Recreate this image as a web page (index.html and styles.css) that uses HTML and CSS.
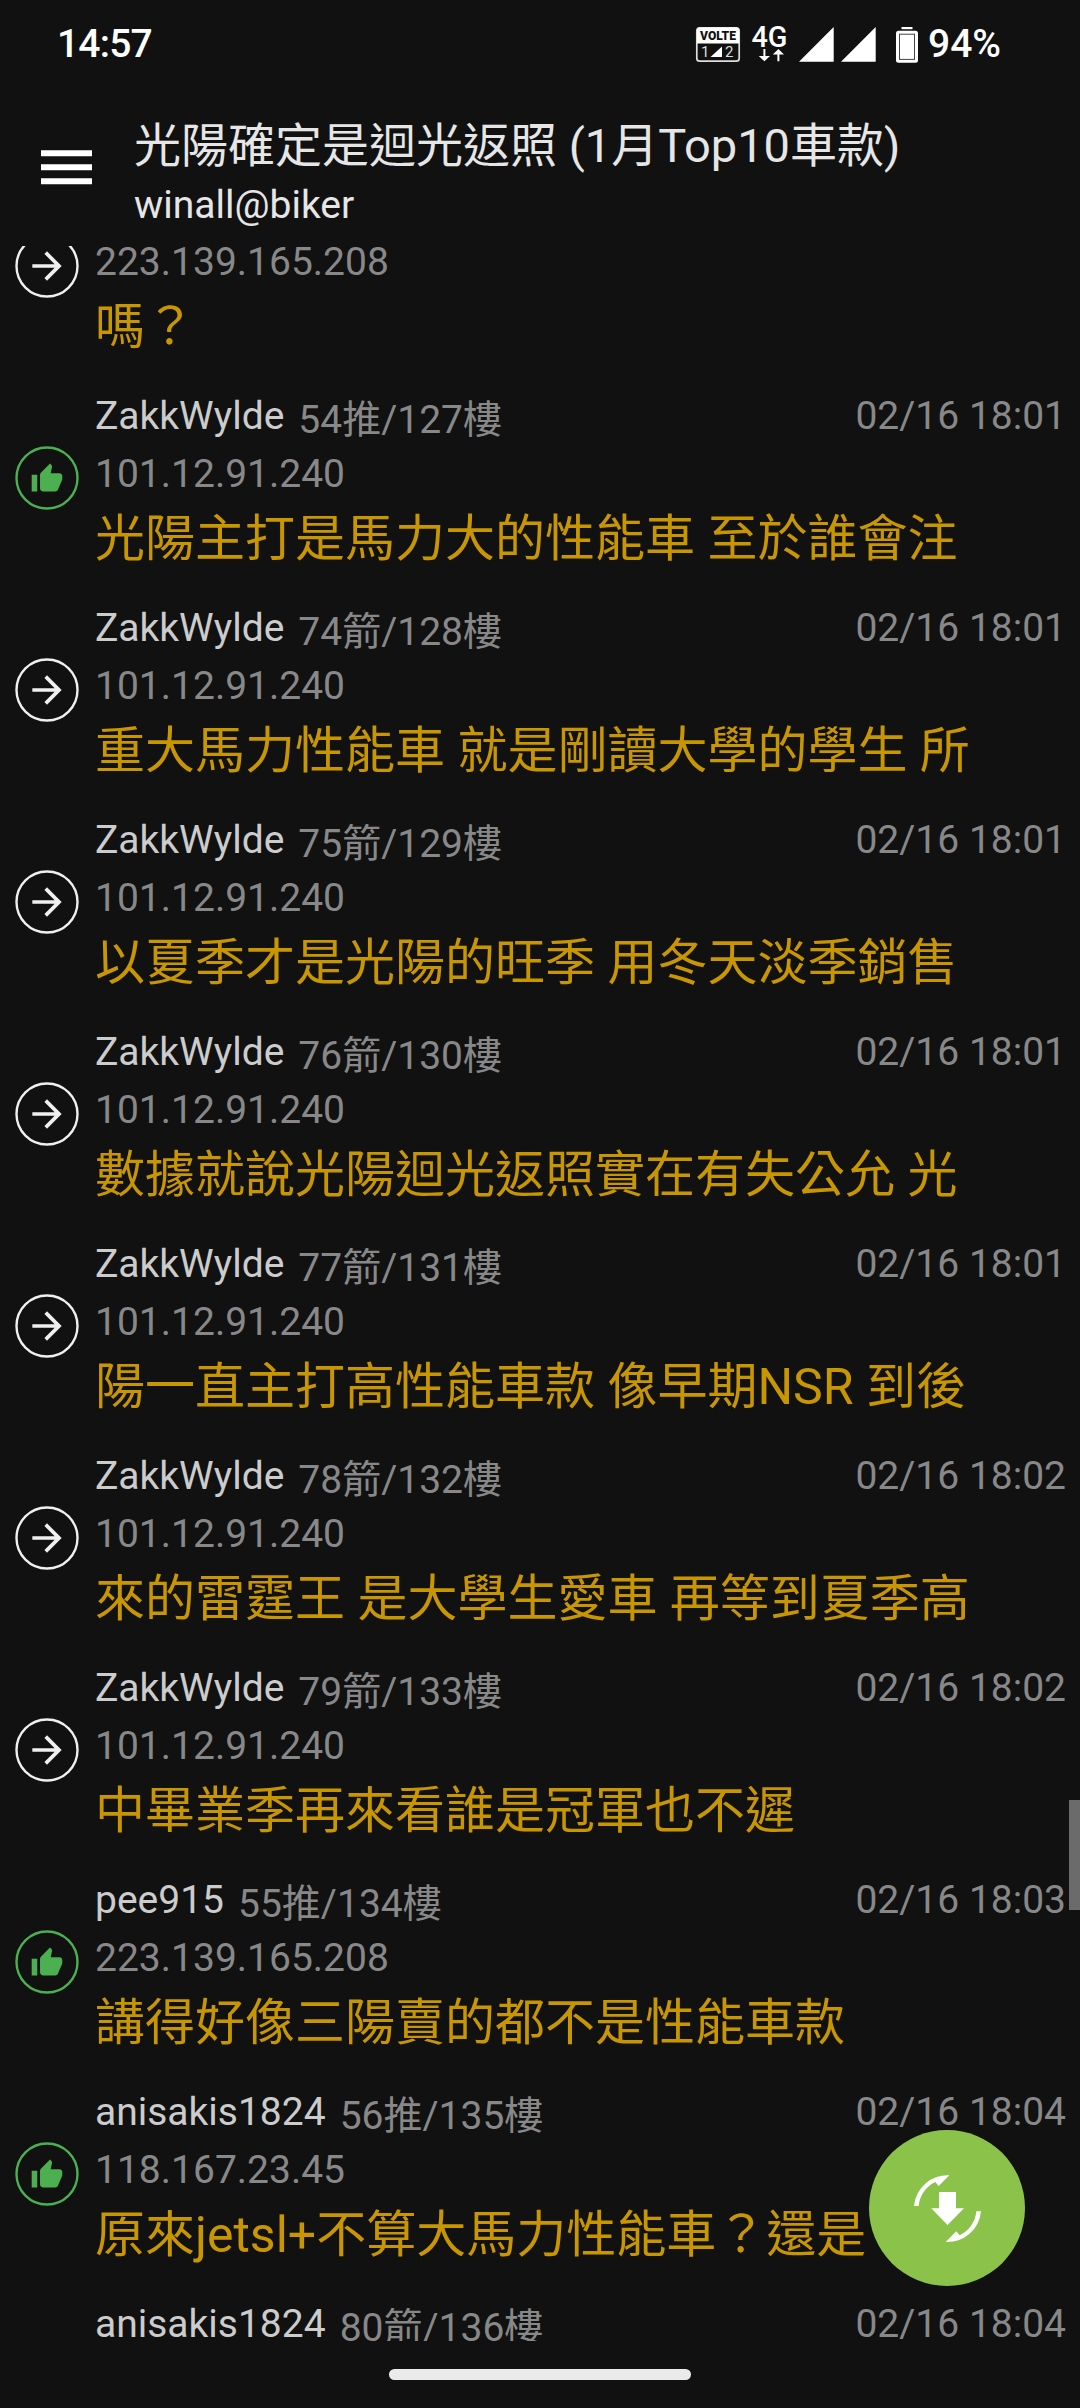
FILE: index.html
```html
<!DOCTYPE html>
<html lang="zh-Hant">
<head>
<meta charset="utf-8">
<title>光陽確定是迴光返照 (1月Top10車款)</title>
<link rel="stylesheet" href="styles.css">
</head>
<body>
<svg class="defs" aria-hidden="true">
  <symbol id="arrow" viewBox="0 0 64 64">
    <circle cx="32" cy="32" r="30.5" fill="none" stroke="currentColor" stroke-width="2.4"/>
    <path transform="translate(10 10) scale(1.8333)" fill="currentColor" d="M12 4l-1.41 1.41L16.17 11H4v2h12.17l-5.58 5.59L12 20l8-8z"/>
  </symbol>
  <symbol id="thumb" viewBox="0 0 64 64">
    <circle cx="32" cy="32" r="30.5" fill="none" stroke="currentColor" stroke-width="2.4"/>
    <path transform="translate(15.3 16.2) scale(1.39)" fill="currentColor" d="M1 21h4V9H1v12zm22-11c0-1.1-.9-2-2-2h-6.31l.95-4.57.03-.32c0-.41-.17-.79-.44-1.06L14.17 1 7.59 7.59C7.22 7.95 7 8.45 7 9v10c0 1.1.9 2 2 2h9c.83 0 1.54-.5 1.84-1.22l3.02-7.05c.09-.23.14-.47.14-.73v-2z"/>
  </symbol>
</svg>
<div class="screen">
  <div class="status">
    <span class="clock">14:57</span>
    <svg class="indicators" width="230" height="44" viewBox="690 22 230 44">
      <rect x="696.8" y="27.8" width="42.4" height="33.4" rx="3" fill="none" stroke="#ddd" stroke-width="1.7"/>
      <path d="M697 43.5V30.5a3 3 0 0 1 3-3h36a3 3 0 0 1 3 3v13z" fill="#fff"/>
      <text x="718" y="40.4" class="volte" text-anchor="middle" textLength="36" lengthAdjust="spacingAndGlyphs">VOLTE</text>
      <text x="701" y="57.3" class="sim">1</text>
      <text x="725" y="57.3" class="sim">2</text>
      <path d="M710.5 57H722V46.5z" fill="#fff"/>
      <text x="751.5" y="47" class="net" textLength="36" lengthAdjust="spacingAndGlyphs">4G</text>
      <path d="M763.4 49h2v7h4.6l-5.6 5.3-5.6-5.3h4.6zM777.4 61.3h2v-6.8h4.6l-5.6-5.5-5.6 5.5h4.6z" fill="#fff"/>
      <path d="M799 61.7h34.7V27zM841 61.7h34.7V27z" fill="#fff"/>
      <path d="M901.5 27h11v2.2h-11z" fill="#fff"/>
      <rect x="896" y="30.7" width="22" height="32" rx="2.5" fill="#fff"/>
      <rect x="899.5" y="34.2" width="15" height="25.2" fill="none" stroke="#444" stroke-width="1"/>
    </svg>
    <span class="battery">94%</span>
  </div>
  <header class="appbar">
    <svg class="menu" width="51" height="36" viewBox="0 0 51 36" fill="#fff"><path d="M0 1.3h51v6H0zM0 15.3h51v6H0zM0 29.3h51v6H0z"/></svg>
    <div class="titles">
      <h1>光陽確定是迴光返照 (1月Top10車款)</h1>
      <p>winall@biker</p>
    </div>
  </header>
  <main class="list">
    <article class="row first"><svg class="badge"><use href="#arrow"/></svg><div class="body"><div class="meta"></div><div class="ip">223.139.165.208</div><p>嗎？</p></div></article>
    <article class="row"><svg class="badge push"><use href="#thumb"/></svg><div class="body"><div class="meta"><b>ZakkWylde</b><i>54推/127樓</i><time>02/16 18:01</time></div><div class="ip">101.12.91.240</div><p>光陽主打是馬力大的性能車 至於誰會注</p></div></article>
    <article class="row"><svg class="badge"><use href="#arrow"/></svg><div class="body"><div class="meta"><b>ZakkWylde</b><i>74箭/128樓</i><time>02/16 18:01</time></div><div class="ip">101.12.91.240</div><p>重大馬力性能車 就是剛讀大學的學生 所</p></div></article>
    <article class="row"><svg class="badge"><use href="#arrow"/></svg><div class="body"><div class="meta"><b>ZakkWylde</b><i>75箭/129樓</i><time>02/16 18:01</time></div><div class="ip">101.12.91.240</div><p>以夏季才是光陽的旺季 用冬天淡季銷售</p></div></article>
    <article class="row"><svg class="badge"><use href="#arrow"/></svg><div class="body"><div class="meta"><b>ZakkWylde</b><i>76箭/130樓</i><time>02/16 18:01</time></div><div class="ip">101.12.91.240</div><p>數據就說光陽迴光返照實在有失公允 光</p></div></article>
    <article class="row"><svg class="badge"><use href="#arrow"/></svg><div class="body"><div class="meta"><b>ZakkWylde</b><i>77箭/131樓</i><time>02/16 18:01</time></div><div class="ip">101.12.91.240</div><p>陽一直主打高性能車款 像早期NSR 到後</p></div></article>
    <article class="row"><svg class="badge"><use href="#arrow"/></svg><div class="body"><div class="meta"><b>ZakkWylde</b><i>78箭/132樓</i><time>02/16 18:02</time></div><div class="ip">101.12.91.240</div><p>來的雷霆王 是大學生愛車 再等到夏季高</p></div></article>
    <article class="row"><svg class="badge"><use href="#arrow"/></svg><div class="body"><div class="meta"><b>ZakkWylde</b><i>79箭/133樓</i><time>02/16 18:02</time></div><div class="ip">101.12.91.240</div><p>中畢業季再來看誰是冠軍也不遲</p></div></article>
    <article class="row"><svg class="badge push"><use href="#thumb"/></svg><div class="body"><div class="meta"><b>pee915</b><i>55推/134樓</i><time>02/16 18:03</time></div><div class="ip">223.139.165.208</div><p>講得好像三陽賣的都不是性能車款</p></div></article>
    <article class="row"><svg class="badge push"><use href="#thumb"/></svg><div class="body"><div class="meta"><b>anisakis1824</b><i>56推/135樓</i><time>02/16 18:04</time></div><div class="ip">118.167.23.45</div><p>原來jetsl+不算大馬力性能車？還是</p></div></article>
    <article class="row"><div class="badge"></div><div class="body"><div class="meta"><b>anisakis1824</b><i>80箭/136樓</i><time>02/16 18:04</time></div></div></article>
  </main>
  <footer class="nav"><span class="pill"></span></footer>
  <div class="scrollbar"></div>
  <button class="fab" aria-label="更新">
    <svg width="156" height="156" viewBox="87 150 468 468" fill="#fff">
      <path d="M297 336h51v49h24l-49.500 50L274 385h23z"/>
      <path id="arc" d="M222 378A101 101 0 0 1 328 286L296 318L286 306A88 88 0 0 0 236 378Z"/>
      <use href="#arc" transform="rotate(180 322.500 386)"/>
    </svg>
  </button>
</div>
</body>
</html>
```
FILE: styles.css
```css
* { box-sizing: border-box; margin: 0; padding: 0; }
body {
  background: #111;
  font-family: Roboto, "Noto Sans CJK TC", sans-serif;
  color: #fff;
}
.defs { display: none; }
.screen {
  position: relative;
  display: flex;
  flex-direction: column;
  width: 1080px;
  height: 2408px;
  overflow: hidden;
  background: #111;
}
.status {
  display: flex;
  align-items: center;
  height: 88px;
  padding: 0 80px 0 57px;
  font-size: 39px;
  font-weight: 500;
  line-height: 90px;
}
.clock { flex: 1; letter-spacing: -0.8px; }
.indicators { flex: none; margin-right: 8px; }
.battery { width: 72px; white-space: nowrap; }
.volte { font-size: 12px; font-weight: 900; fill: #111; }
.sim { font-size: 15px; font-weight: 400; fill: #ddd; }
.net { font-size: 29px; font-weight: 500; fill: #fff; }
.appbar {
  display: flex;
  height: 158px;
  padding: 61px 0 0 41px;
}
.titles { margin: -33px 0 0 42px; }
h1 {
  font-size: 47px;
  font-weight: 400;
  line-height: 60px;
  color: #e6e6e6;
  white-space: nowrap;
}
.titles p { margin-top: 4px; font-size: 39px; line-height: 50px; color: #e6e6e6; }
.list { height: 2095px; overflow: hidden; }
.row { display: flex; height: 212px; }
.first { margin-top: -69px; }
.badge {
  flex: none;
  width: 64px;
  height: 64px;
  margin: 57px 16px 0 15px;
  color: #f0f0f0;
}
.push { color: #4caf50; }
.body { flex: 1; padding-right: 14px; }
.meta {
  display: flex;
  height: 58px;
  font-size: 39px;
  line-height: 54px;
  color: #888;
}
.meta b { font-weight: 400; color: #ccc; margin-right: 14px; }
.meta i { font-style: normal; padding-top: 4px; }
.meta time { margin-left: auto; }
.ip { font-size: 39px; line-height: 54px; color: #888; }
.body p {
  padding-top: 3px;
  font-size: 50px;
  line-height: 70px;
  color: #c89600;
  white-space: nowrap;
}
.nav { display: flex; justify-content: center; padding-top: 28px; }
.pill { width: 302px; height: 11px; border-radius: 6px; background: #ebebeb; }
.scrollbar {
  position: absolute;
  left: 1069px;
  top: 1800px;
  width: 11px;
  height: 110px;
  background: #6b6b6b;
}
.fab {
  position: absolute;
  left: 869px;
  top: 2130px;
  width: 156px;
  height: 156px;
  border: 0;
  border-radius: 50%;
  background: #8bc34a;
}
.fab svg { display: block; }
```
